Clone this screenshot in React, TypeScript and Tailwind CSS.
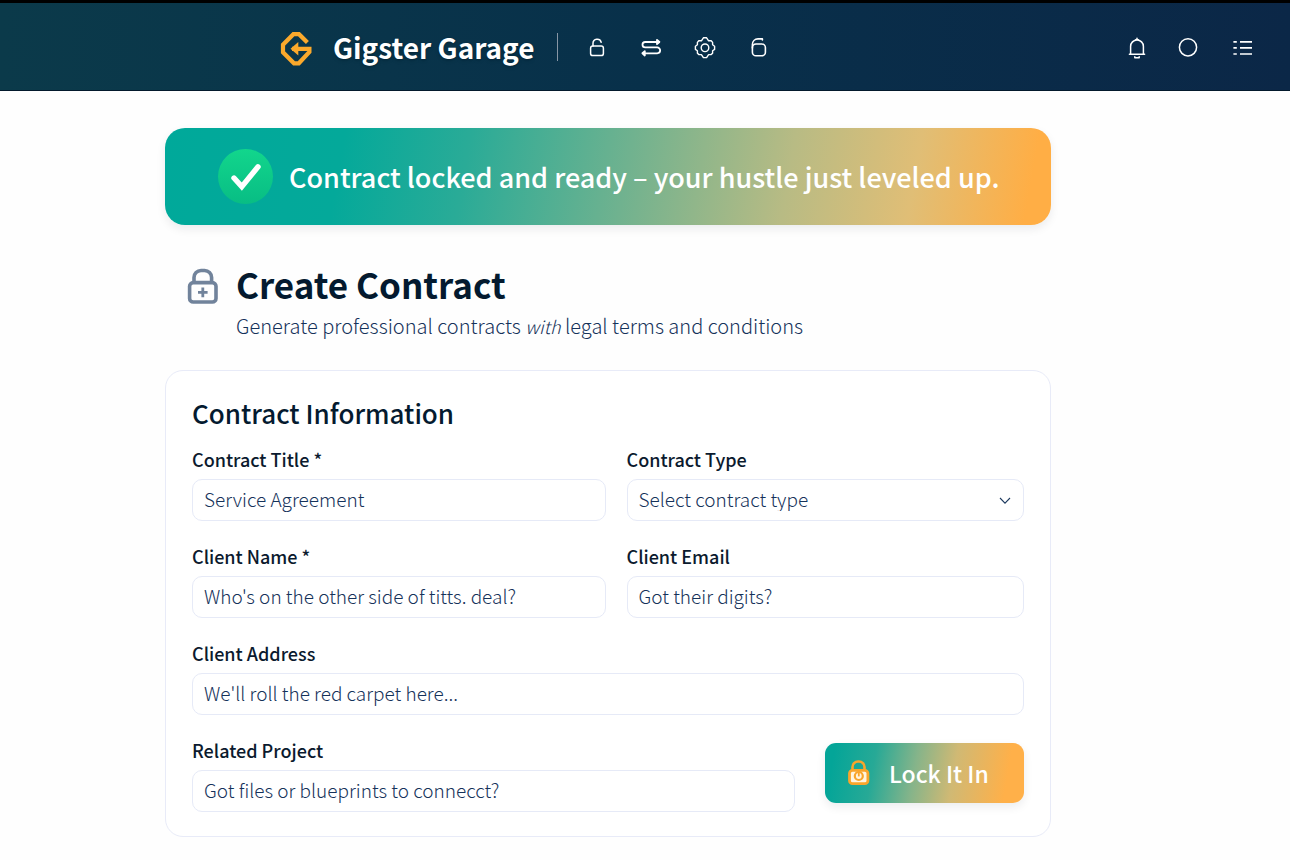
import type { ReactNode } from "react";

const labelClass = "mb-2 block text-[18px] leading-6 font-medium text-[#0b1a2e]";
const controlClass =
  "block h-[42px] w-full rounded-[10px] border border-[#e6eaf7] bg-white pl-[11px] text-[19px] leading-6 font-light text-[#15325a]";
const inputClass = `${controlClass} pr-[11px] pb-1 placeholder:text-[#15325a] placeholder:opacity-100`;
const selectClass = `${controlClass} appearance-none pr-10 pb-0.5`;

function Field({ id, label, children }: { id: string; label: string; children: ReactNode }) {
  return (
    <div className="min-w-0">
      <label htmlFor={id} className={labelClass}>
        {label}
      </label>
      {children}
    </div>
  );
}

function Logo() {
  return (
    <svg className="mt-1" width="34" height="36" viewBox="0 0 34 36" fill="none" aria-hidden="true">
      <path
        d="M27.4 11.6 19 3.2H13.4L3 13.7v7.6L14 32.3h4.8L29.4 21v-3.2H12"
        stroke="#fba92c"
        strokeWidth="4.2"
        strokeLinejoin="miter"
      />
      <path d="M10.5 17.8 18.3 11v13.6z" fill="#fba92c" />
    </svg>
  );
}

function Icon({ children, width = "1.5" }: { children: ReactNode; width?: string }) {
  return (
    <svg
      width="24"
      height="24"
      viewBox="0 0 24 24"
      fill="none"
      stroke="currentColor"
      strokeWidth={width}
      strokeLinecap="round"
      strokeLinejoin="round"
      aria-hidden="true"
    >
      {children}
    </svg>
  );
}

function Header() {
  return (
    <header className="flex h-[91px] items-center border-t-[3px] border-b border-t-black border-b-[#041a2c] bg-linear-to-r from-[#0b3a4a] via-[#08304a] to-[#0b2747] pr-9 pl-[280px] text-white">
      <Logo />
      <span className="ml-[19px] text-[28px] leading-10 font-bold whitespace-nowrap text-shadow-md">Gigster Garage</span>
      <span className="ml-[22px] h-7 w-px bg-[#8796a5]" />
      <nav className="ml-[27px] flex items-center gap-[30px]" aria-label="Main">
        <button type="button" aria-label="Contracts">
          <Icon>
            <rect x="5.6" y="11" width="12.8" height="9.6" rx="2.2" />
            <path d="M8 11V8.3a4.2 4.2 0 0 1 8.2-1.1" />
          </Icon>
        </button>
        <button type="button" aria-label="Workflow">
          <Icon width="1.8">
            <path d="M18 7H6.2a2.6 2.6 0 0 0 0 5.4h12a2.9 2.9 0 0 1 0 5.9H6" />
            <path d="M18 4.8 20.4 7 18 9.2zM5.8 16.2 3.4 18.3l2.4 2.2z" fill="currentColor" />
          </Icon>
        </button>
        <button type="button" aria-label="Settings">
          <Icon width="1.4">
            <circle cx="12" cy="12.8" r="3.8" />
            <path d="M10.4 2.8h3.2l2 3h2.6l1.4 1.6v2.4l2 1.4v3.2l-2 1.4v2.4l-1.6 1.4h-2.4l-2 3h-3.2l-2-3H6l-1.6-1.4v-2.4l-2-1.4v-3.2l2-1.4V7.4l1.4-1.6h2.6z" />
          </Icon>
        </button>
        <button type="button" aria-label="Security">
          <Icon width="1.6">
            <rect x="5.4" y="9" width="13" height="11.8" rx="3.6" />
            <path d="M5.4 13V9.6C5.4 6.2 7.8 3.9 11 3.9h4.4V5" />
          </Icon>
        </button>
      </nav>
      <div className="ml-auto flex items-center gap-7">
        <button type="button" aria-label="Notifications">
          <Icon>
            <path d="M4.6 19.3V11.4a6.4 6.4 0 0 1 12.8 0v7.9M3.4 19.3h15.2M8.8 22.8h4.4v-1M8.8 22.8v-1M11 3.3v1.6M9.6 4.7h2.8" />
          </Icon>
        </button>
        <button type="button" aria-label="Account">
          <Icon>
            <circle cx="10" cy="12.3" r="8.6" />
          </Icon>
        </button>
        <button type="button" aria-label="Menu">
          <Icon width="1.7">
            <path d="M3.4 6.8h3.4M10 6.8H22M3.4 12.8h3.4M10 12.8H22M3.4 19h3.4M10 19H22" strokeLinecap="butt" />
          </Icon>
        </button>
      </div>
    </header>
  );
}

function Banner() {
  return (
    <div
      role="status"
      className="flex min-h-[97px] items-center gap-4 rounded-[20px] bg-[linear-gradient(100deg,#00a99a_0%,#04a99a_20%,#2aab97_34%,#70b28f_52%,#b8bb84_70%,#e0be76_84%,#ffae45_97%)] pr-8 pl-[53px] shadow-[0_4px_10px_rgba(15,23,42,0.08)]"
    >
      <span className="flex size-[55px] shrink-0 items-center justify-center rounded-full bg-linear-to-b from-[#12d68c] to-[#08bd84]">
        <svg width="32" height="28" viewBox="0 0 32 28" fill="none" aria-hidden="true">
          <path d="M4 15 11.8 23.6 28 3.8" stroke="#fff" strokeWidth="5.4" strokeLinecap="round" />
        </svg>
      </span>
      <p className="text-[27px] leading-10 font-medium text-white">
        Contract locked and ready – your hustle just leveled up.
      </p>
    </div>
  );
}

function PageTitle() {
  return (
    <div className="mt-[35px] flex items-start gap-[17px] pl-[22px]">
      <svg className="mt-[7px] shrink-0" width="32" height="38" viewBox="0 0 32 38" fill="none" stroke="#71839b" aria-hidden="true">
        <rect x="2.6" y="15.6" width="26.4" height="19.4" rx="3.6" strokeWidth="3.6" />
        <path d="M7 15V10.5a7 7 0 0 1 7-7h3.6a7 7 0 0 1 7 7V15" strokeWidth="3.6" />
        <path d="M15.8 20.6v9.6M11 25.4h9.6" strokeWidth="2.8" />
      </svg>
      <div className="min-w-0">
        <h1 className="text-[35px] leading-[48px] font-bold text-[#041a2f]">Create Contract</h1>
        <p className="mt-1 text-[20px] leading-7 font-light text-[#15325a]">
          Generate professional contracts <em className="text-[18px]">with</em> legal terms and conditions
        </p>
      </div>
    </div>
  );
}

function ContractForm() {
  return (
    <form
      className="mt-[30px] rounded-[18px] border border-[#e8ebf8] bg-white px-[26px] py-6"
      onSubmit={(event) => event.preventDefault()}
    >
      <h2 className="mb-4 text-[26px] leading-9 font-medium text-[#041a2f]">Contract Information</h2>
      <div className="flex flex-col gap-[23px]">
        <div className="grid grid-cols-[minmax(0,413fr)_minmax(0,397fr)] gap-x-[21px] gap-y-[23px]">
          <Field id="title" label="Contract Title *">
            <input id="title" className={inputClass} placeholder="Service Agreement" />
          </Field>
          <Field id="type" label="Contract Type">
            <div className="relative">
              <select id="type" className={selectClass}>
                <option>Select contract type</option>
              </select>
              <svg
                className="pointer-events-none absolute top-[18px] right-3"
                width="14"
                height="8"
                viewBox="0 0 14 8"
                fill="none"
                stroke="#1d3a5f"
                strokeWidth="1.1"
                aria-hidden="true"
              >
                <path d="M2 1 7 6.2 12 1" />
              </svg>
            </div>
          </Field>
          <Field id="client" label="Client Name *">
            <input id="client" className={inputClass} placeholder="Who's on the other side of titts. deal?" />
          </Field>
          <Field id="email" label="Client Email">
            <input id="email" type="email" className={inputClass} placeholder="Got their digits?" />
          </Field>
        </div>
        <Field id="address" label="Client Address">
          <input id="address" className={inputClass} placeholder="We'll roll the red carpet here..." />
        </Field>
        <div className="grid grid-cols-[minmax(0,1fr)_auto] items-center gap-[30px]">
          <Field id="project" label="Related Project">
            <input id="project" className={inputClass} placeholder="Got files or blueprints to connecct?" />
          </Field>
          <button
            type="submit"
            className="mb-1 flex h-[60px] w-[199px] items-center gap-[18px] rounded-[11px] bg-[linear-gradient(100deg,#04a598_5%,#27a996_25%,#85b48a_45%,#d0b974_64%,#ffb049_90%)] pl-[22px] text-[23px] leading-8 font-medium text-white shadow-[0_4px_10px_rgba(15,23,42,0.08)]"
          >
            <svg width="24" height="28" viewBox="0 0 24 28" fill="none" aria-hidden="true">
              <path d="M5.5 11V8a5.5 5.5 0 0 1 5.5-5.5h1A5.5 5.5 0 0 1 17.5 8v3" stroke="#f9a52b" strokeWidth="2.6" />
              <rect x="2.5" y="11.3" width="18.4" height="13.4" rx="3" fill="#fff4df" stroke="#f9a52b" strokeWidth="2.8" />
              <circle cx="11.8" cy="17" r="4" fill="#fff4df" stroke="#f9a52b" strokeWidth="2.2" />
              <path d="M11.8 14v3.4" stroke="#f9a52b" strokeWidth="1.8" />
            </svg>
            Lock It In
          </button>
        </div>
      </div>
    </form>
  );
}

export default function App() {
  return (
    <div className="min-h-screen bg-[#fefefe] font-['Noto_Sans_CJK_SC','Open_Sans',sans-serif]">
      <Header />
      <main className="pt-[37px] pr-[239px] pb-[22px] pl-[165px]">
        <Banner />
        <PageTitle />
        <ContractForm />
      </main>
    </div>
  );
}
